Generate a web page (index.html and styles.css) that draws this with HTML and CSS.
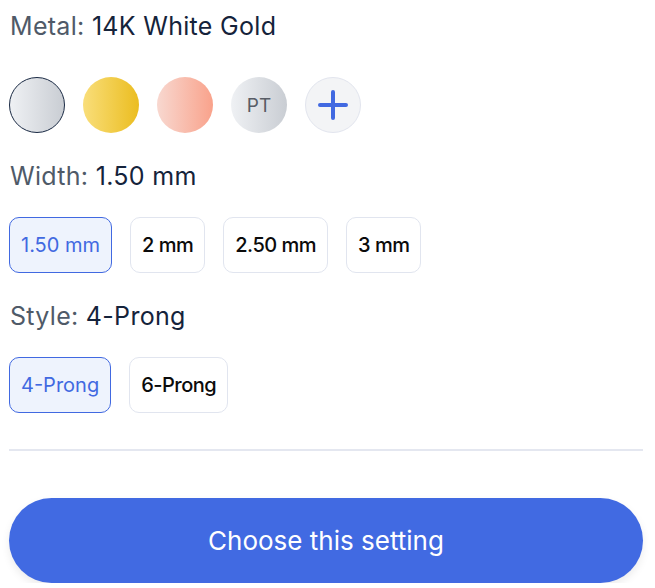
FILE: index.html
```html
<!DOCTYPE html>
<html>
<head>
<meta charset="utf-8">
<link rel="stylesheet" href="styles.css">
</head>
<body>
<div class="panel">
  <h2 class="label"><span class="key">Metal:</span> <span class="val">14K White Gold</span></h2>
  <div class="swatches">
    <button class="sw sw-white selected" aria-label="14K White Gold"></button>
    <button class="sw sw-yellow" aria-label="14K Yellow Gold"></button>
    <button class="sw sw-rose" aria-label="14K Rose Gold"></button>
    <button class="sw sw-pt">PT</button>
    <button class="sw sw-more" aria-label="More metals">
      <svg width="32" height="32" viewBox="0 0 32 32"><path d="M16 3v26M3 16h26" stroke="#4169e1" stroke-width="4" stroke-linecap="round" fill="none"/></svg>
    </button>
  </div>

  <h2 class="label"><span class="key">Width:</span> <span class="val">1.50 mm</span></h2>
  <div class="options">
    <button class="opt active">1.50 mm</button>
    <button class="opt">2 mm</button>
    <button class="opt">2.50 mm</button>
    <button class="opt">3 mm</button>
  </div>

  <h2 class="label"><span class="key">Style:</span> <span class="val">4-Prong</span></h2>
  <div class="options last">
    <button class="opt active">4-Prong</button>
    <button class="opt">6-Prong</button>
  </div>

  <hr class="divider">

  <button class="cta">Choose this setting</button>
</div>
</body>
</html>
```

FILE: styles.css
```css
html, body {
  margin: 0;
  padding: 0;
  background: #ffffff;
}
body {
  font-family: Inter, "Open Sans", Arial, sans-serif;
}
.panel {
  width: 634px;
  padding: 11px 0 0 9px;
  display: flex;
  flex-direction: column;
}
.label {
  margin: 0;
  font-size: 25px;
  font-weight: 400;
  line-height: 30px;
  letter-spacing: 0.3px;
  padding-left: 1px;
}
.key { color: #4f5a68; }
.val { color: #15233b; }

.swatches {
  display: flex;
  gap: 18px;
  margin-top: 36px;
  margin-bottom: 28px;
}
.sw {
  width: 56px;
  height: 56px;
  border-radius: 50%;
  border: none;
  padding: 0;
  display: flex;
  align-items: center;
  justify-content: center;
  font-family: inherit;
}
.sw-white, .sw-pt {
  background: linear-gradient(90deg, #eff1f4, #c9cdd3);
}
.sw-white.selected {
  border: 1px solid #1a2a44;
}
.sw-yellow {
  background: linear-gradient(90deg, #f9de7a, #ebbd20);
}
.sw-rose {
  background: linear-gradient(90deg, #f8d8d0, #f9a28b);
}
.sw-pt {
  color: #585d66;
  font-size: 19px;
}
.sw-more {
  background: #f3f4f6;
  border: 1px solid #e2e5ee;
}

.options {
  display: flex;
  gap: 18px;
  margin-top: 26px;
  margin-bottom: 28px;
}
.options.last {
  margin-bottom: 36px;
}
.opt {
  height: 56px;
  padding: 0 11px;
  border-radius: 10px;
  border: 1px solid #e1e5ef;
  background: #ffffff;
  color: #0b0b0b;
  font-family: inherit;
  font-size: 20px;
  font-weight: 500;
  letter-spacing: -0.5px;
}
.opt.active {
  border-color: #4169e1;
  background: #eef3fd;
  color: #4169e1;
  font-weight: 400;
  letter-spacing: 0;
}

.divider {
  margin: 0;
  border: none;
  height: 2px;
  background: #e4e7f0;
}
.cta {
  margin-top: 47px;
  height: 85px;
  width: 100%;
  border: none;
  border-radius: 43px;
  background: #416ae2;
  color: #ffffff;
  font-family: inherit;
  font-size: 26px;
  font-weight: 400;
  box-shadow: 0 4px 8px rgba(0, 0, 0, 0.08);
}
```
